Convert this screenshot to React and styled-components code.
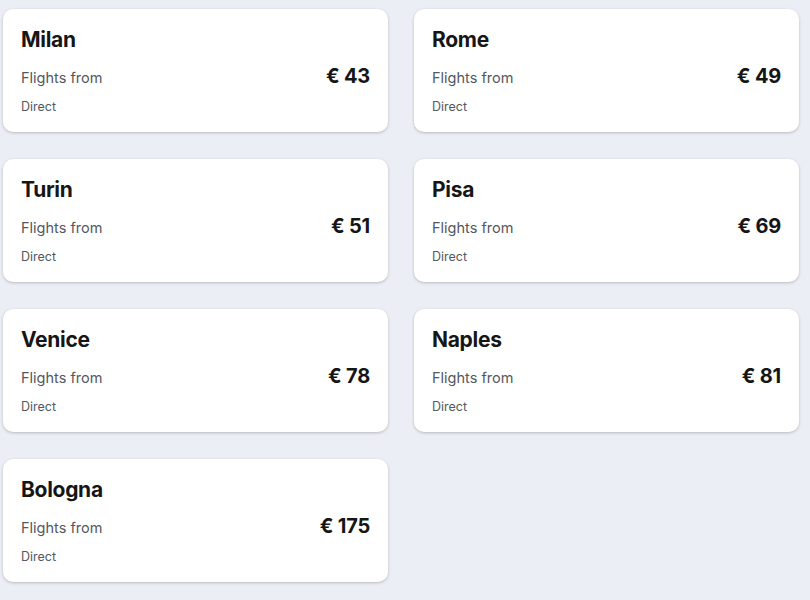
import React from 'react';
import styled, { createGlobalStyle } from 'styled-components';

const GlobalStyle = createGlobalStyle`
  html, body {
    margin: 0;
    padding: 0;
    background: #eceef5;
    font-family: Inter, "Noto Sans", "Liberation Sans", sans-serif;
    -webkit-font-smoothing: antialiased;
  }
`;

const destinations = [
  { city: 'Milan', price: 43 },
  { city: 'Rome', price: 49 },
  { city: 'Turin', price: 51 },
  { city: 'Pisa', price: 69 },
  { city: 'Venice', price: 78 },
  { city: 'Naples', price: 81 },
  { city: 'Bologna', price: 175 },
];

const App = () => {
  return (
    <>
      <GlobalStyle />
      <Grid>
        {destinations.map((d) => (
          <Card key={d.city}>
            <City>{d.city}</City>
            <PriceRow>
              <Label>Flights from</Label>
              <Price>€ {d.price}</Price>
            </PriceRow>
            <Stops>Direct</Stops>
          </Card>
        ))}
      </Grid>
    </>
  );
};

const Grid = styled.div`
  display: grid;
  grid-template-columns: 385px 385px;
  column-gap: 26px;
  row-gap: 27px;
  padding: 9px 11px 20px 3px;
`;

const Card = styled.div`
  display: flex;
  flex-direction: column;
  height: 123px;
  box-sizing: border-box;
  padding: 19px 18px 0 18px;
  background: #fff;
  border-radius: 10px;
  box-shadow: 0 1px 3px rgba(37, 32, 31, 0.25);
`;

const City = styled.div`
  font-size: 21px;
  line-height: 24px;
  font-weight: 700;
  color: #161616;
  letter-spacing: -0.3px;
`;

const PriceRow = styled.div`
  display: flex;
  justify-content: space-between;
  align-items: baseline;
  margin-top: 12px;
`;

const Label = styled.span`
  font-size: 14.5px;
  line-height: 24px;
  color: #545860;
`;

const Price = styled.span`
  font-size: 20px;
  line-height: 24px;
  font-weight: 700;
  color: #161616;
  letter-spacing: -0.2px;
`;

const Stops = styled.div`
  margin-top: 9px;
  font-size: 12.5px;
  line-height: 16px;
  color: #545860;
`;

export default App;
